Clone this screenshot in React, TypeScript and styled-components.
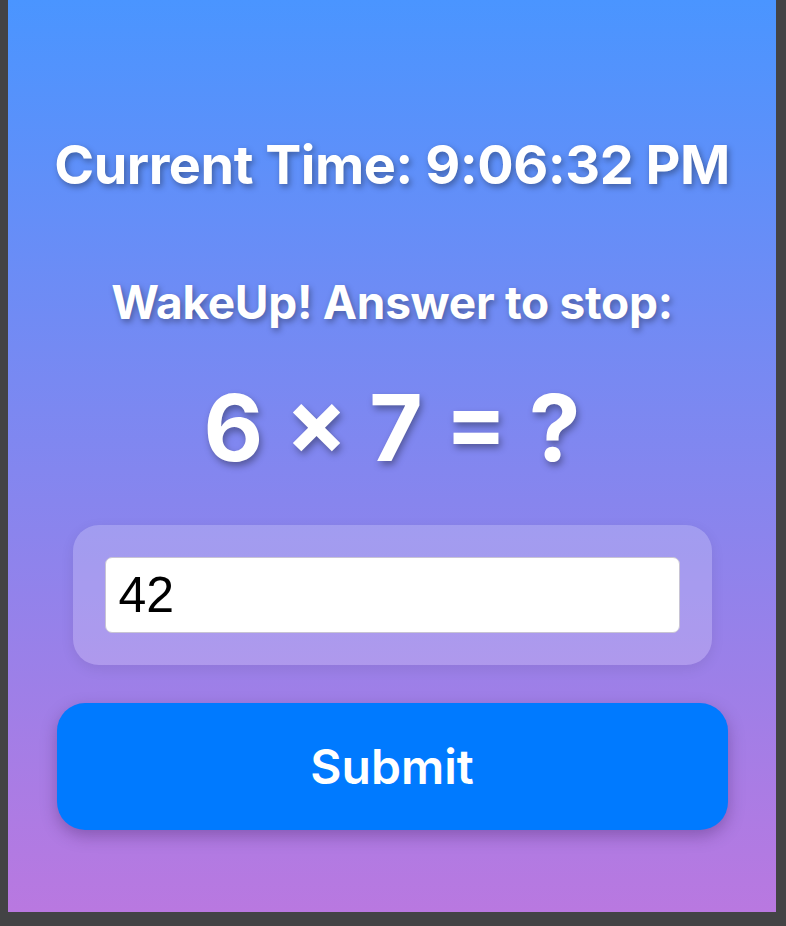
import React from "react";
import styled, { createGlobalStyle } from "styled-components";

const Global = createGlobalStyle`
  html, body {
    margin: 0;
    padding: 0;
    background: #434345;
  }
  #root {
    width: 786px;
    height: 926px;
  }
`;

const Frame = styled.div`
  width: 786px;
  height: 926px;
  box-sizing: border-box;
  padding: 0 10px 14px 8px;
  background: #434345;
  display: flex;
`;

const Screen = styled.main`
  flex: 1;
  background: linear-gradient(180deg, #4a95ff 0%, #b978e0 100%);
  display: flex;
  flex-direction: column;
  align-items: center;
  padding-top: 133px;
  font-family: Inter, "Noto Sans", sans-serif;
  color: #ffffff;
`;

const Clock = styled.h1`
  margin: 0;
  font-size: 54px;
  font-weight: 700;
  line-height: 64px;
  letter-spacing: -0.5px;
  white-space: nowrap;
  text-shadow: 2px 3px 6px rgba(0, 0, 0, 0.35);
`;

const Prompt = styled.h2`
  margin: 77px 0 0;
  font-size: 46px;
  font-weight: 700;
  line-height: 56px;
  letter-spacing: -0.3px;
  white-space: nowrap;
  text-shadow: 2px 3px 6px rgba(0, 0, 0, 0.35);
`;

const Equation = styled.div`
  margin: 43px 0 0;
  font-size: 92px;
  font-weight: 700;
  line-height: 110px;
  text-shadow: 2px 4px 7px rgba(0, 0, 0, 0.35);
`;

const Panel = styled.div`
  margin-top: 42px;
  width: 639px;
  height: 140px;
  box-sizing: border-box;
  padding: 32px;
  border-radius: 26px;
  background: rgba(255, 255, 255, 0.2);
  box-shadow: 0 4px 14px rgba(0, 0, 0, 0.08);
`;

const AnswerInput = styled.input`
  width: 100%;
  height: 76px;
  box-sizing: border-box;
  border: 1px solid #c8c4d4;
  border-radius: 7px;
  background: #ffffff;
  padding: 0 13px;
  font-family: "Liberation Sans", Arial, sans-serif;
  font-size: 50px;
  color: #000000;
  outline: none;
`;

const SubmitButton = styled.button`
  margin-top: 38px;
  width: 671px;
  height: 127px;
  border: none;
  border-radius: 28px;
  background: #007aff;
  color: #ffffff;
  font-family: Inter, "Noto Sans", sans-serif;
  font-size: 48px;
  font-weight: 600;
  box-shadow: 0 6px 16px rgba(60, 30, 90, 0.35);
  cursor: pointer;
`;

export default function App() {
  return (
    <>
      <Global />
      <Frame>
        <Screen>
          <Clock>Current Time: 9:06:32 PM</Clock>
          <Prompt>WakeUp! Answer to stop:</Prompt>
          <Equation>6 × 7 = ?</Equation>
          <Panel>
            <AnswerInput defaultValue="42" />
          </Panel>
          <SubmitButton>Submit</SubmitButton>
        </Screen>
      </Frame>
    </>
  );
}
